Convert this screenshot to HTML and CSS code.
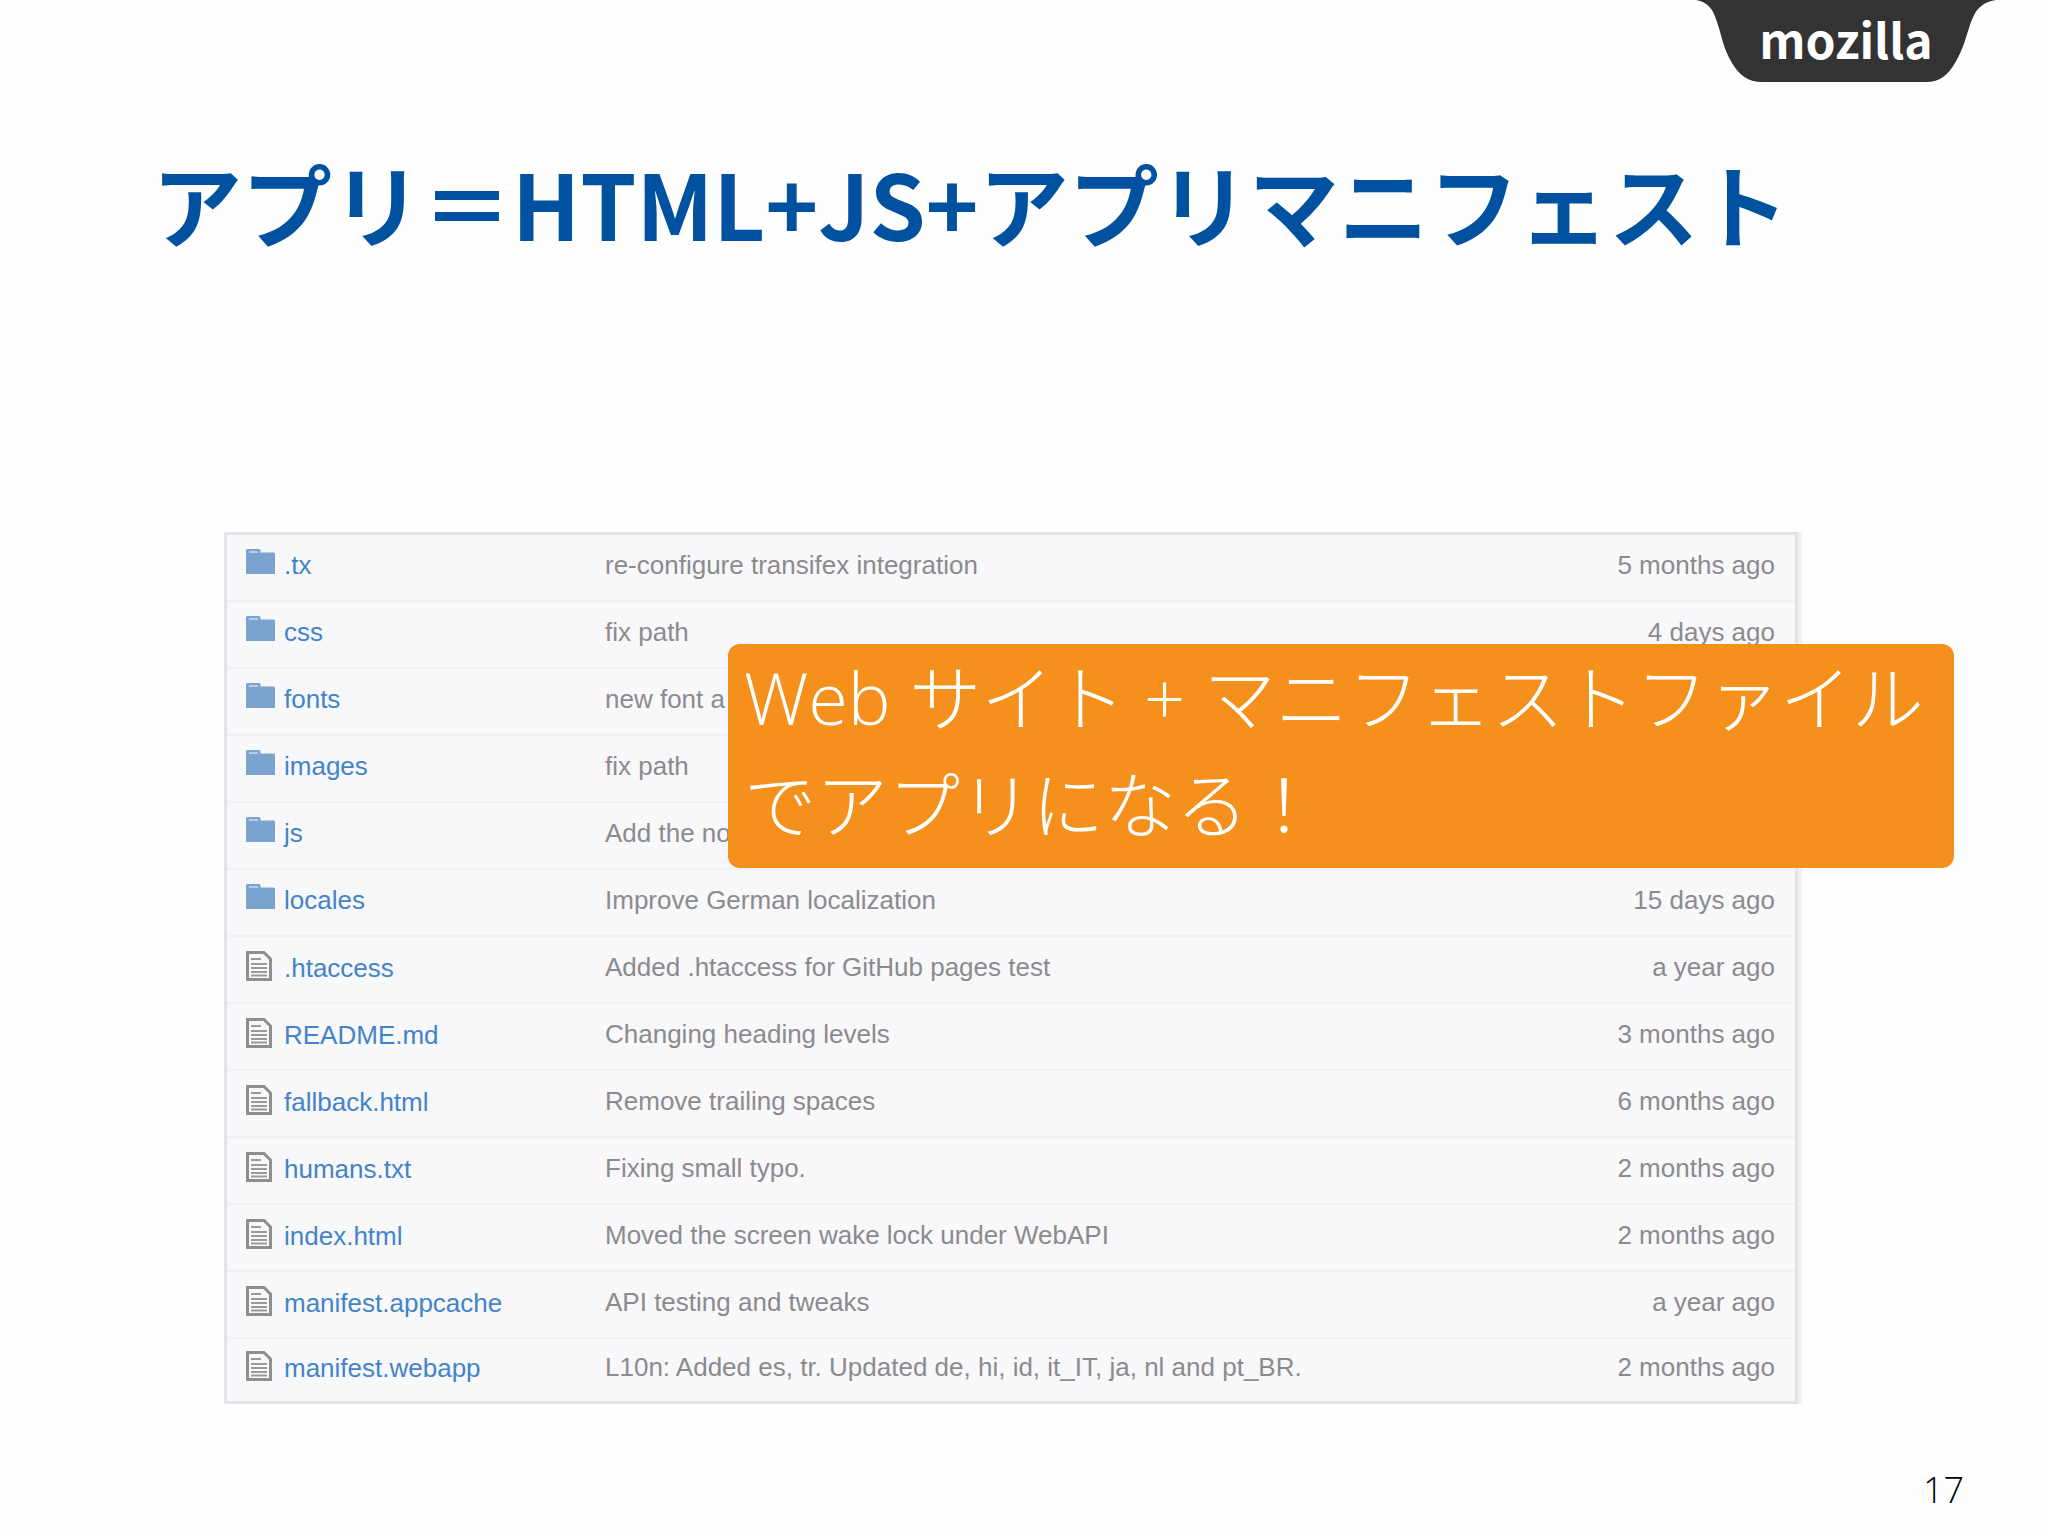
FILE: index.html
```html
<!DOCTYPE html>
<html lang="ja">
<head>
    <meta charset="UTF-8">
    <meta name="viewport" content="width=device-width, initial-scale=1.0">
    <title>アプリ＝HTML+JS+アプリマニフェスト</title>
    <link rel="stylesheet" href="styles.css">
</head>
<body>
    <!-- shared icons -->
    <svg class="sprite" aria-hidden="true">
        <symbol id="folder" viewBox="0 0 29 25">
            <path fill="#7ba3cf" d="M0 1.500Q0 0 1.500 0H13Q14.500 0 14.500 1.500V3.500H27.500Q29 3.500 29 5V25H0Z"/>
            <path fill="#b9cce4" d="M3 2H12V4H3Z"/>
        </symbol>
        <symbol id="file" viewBox="0 0 26 30">
            <path fill="#f8f8f8" stroke="#8d8f8c" stroke-width="3" d="M1.500 1.500H18L24.500 8V28.500H1.500Z"/>
            <path stroke="#999b9a" stroke-width="2" d="M5 8H15M5 13H21M5 17H21M5 21H21M5 24.500H21"/>
        </symbol>
    </svg>

    <header class="topbar">
        <div class="logo">
            <svg class="logo-tab" viewBox="0 0 300 82" aria-hidden="true">
                <path fill="#333" d="M0 0H300C286 2 280 9 275 22C270 36 268 48 259 63C252 75 244 82 230 82H66C52 82 43 75 36 63C27 48 26 36 21 22C17 9 12 2 0 0Z"/>
            </svg>
            <span class="logo-text">mozilla</span>
        </div>
    </header>

    <main class="slide">
        <h1>アプリ＝HTML+JS+アプリマニフェスト</h1>

        <div class="browser">
            <table class="files">
                <tbody>
                    <tr><td class="name"><svg class="icon folder"><use href="#folder"/></svg><a href="#">.tx</a></td><td class="message">re-configure transifex integration</td><td class="age">5 months ago</td></tr>
                    <tr><td class="name"><svg class="icon folder"><use href="#folder"/></svg><a href="#">css</a></td><td class="message">fix path</td><td class="age">4 days ago</td></tr>
                    <tr><td class="name"><svg class="icon folder"><use href="#folder"/></svg><a href="#">fonts</a></td><td class="message">new font a</td><td class="age"></td></tr>
                    <tr><td class="name"><svg class="icon folder"><use href="#folder"/></svg><a href="#">images</a></td><td class="message">fix path</td><td class="age"></td></tr>
                    <tr><td class="name"><svg class="icon folder"><use href="#folder"/></svg><a href="#">js</a></td><td class="message">Add the no</td><td class="age"></td></tr>
                    <tr><td class="name"><svg class="icon folder"><use href="#folder"/></svg><a href="#">locales</a></td><td class="message">Improve German localization</td><td class="age">15 days ago</td></tr>
                    <tr><td class="name"><svg class="icon file"><use href="#file"/></svg><a href="#">.htaccess</a></td><td class="message">Added .htaccess for GitHub pages test</td><td class="age">a year ago</td></tr>
                    <tr><td class="name"><svg class="icon file"><use href="#file"/></svg><a href="#">README.md</a></td><td class="message">Changing heading levels</td><td class="age">3 months ago</td></tr>
                    <tr><td class="name"><svg class="icon file"><use href="#file"/></svg><a href="#">fallback.html</a></td><td class="message">Remove trailing spaces</td><td class="age">6 months ago</td></tr>
                    <tr><td class="name"><svg class="icon file"><use href="#file"/></svg><a href="#">humans.txt</a></td><td class="message">Fixing small typo.</td><td class="age">2 months ago</td></tr>
                    <tr><td class="name"><svg class="icon file"><use href="#file"/></svg><a href="#">index.html</a></td><td class="message">Moved the screen wake lock under WebAPI</td><td class="age">2 months ago</td></tr>
                    <tr><td class="name"><svg class="icon file"><use href="#file"/></svg><a href="#">manifest.appcache</a></td><td class="message">API testing and tweaks</td><td class="age">a year ago</td></tr>
                    <tr><td class="name"><svg class="icon file"><use href="#file"/></svg><a href="#">manifest.webapp</a></td><td class="message">L10n: Added es, tr. Updated de, hi, id, it_IT, ja, nl and pt_BR.</td><td class="age">2 months ago</td></tr>
                </tbody>
            </table>

            <p class="callout">Web サイト + マニフェストファイル<br>でアプリになる！</p>
        </div>
    </main>

    <footer class="page-number">17</footer>
</body>
</html>
```

FILE: styles.css
```css
* {
    margin: 0;
    padding: 0;
    box-sizing: border-box;
}

body {
    min-height: 100vh;
    display: flex;
    flex-direction: column;
    background: #fefefe;
    font-family: "Liberation Sans", "Noto Sans CJK JP", sans-serif;
}

.sprite {
    position: absolute;
    width: 0;
    height: 0;
}

.topbar {
    display: flex;
    justify-content: flex-end;
    padding-right: 52px;
}

.logo {
    display: grid;
    width: 300px;
    height: 82px;
}

.logo-tab,
.logo-text {
    grid-area: 1 / 1;
}

.logo-tab {
    width: 300px;
    height: 82px;
}

.logo-text {
    font-family: "Noto Sans CJK JP", sans-serif;
    font-size: 48px;
    font-weight: 700;
    line-height: 76px;
    text-align: center;
    color: #fff;
}

.slide {
    flex: 1;
    padding: 0 250px 0 224px;
}

h1 {
    margin: 50px -100px 260px -72px;
    font-family: "Noto Sans CJK JP", sans-serif;
    font-size: 90px;
    font-weight: 700;
    line-height: 140px;
    white-space: nowrap;
    color: #0052a0;
}

.browser {
    position: relative;
}

.files {
    width: 100%;
    border: 3px solid #e4e3e7;
    border-collapse: separate;
    border-spacing: 0;
    background: #f8f7fa;
    box-shadow: 4px 0 0 #f1f0f3;
    font-size: 26px;
    line-height: 30px;
    color: #8b8b8e;
}

.files td {
    height: 67px;
    padding-bottom: 6px;
    border-bottom: 2px solid #f1f0f3;
    vertical-align: middle;
    white-space: nowrap;
}

.files tr:last-child td {
    height: 62px;
    border-bottom: none;
}

.files .name {
    width: 378px;
    padding-left: 19px;
}

.files .age {
    padding-right: 20px;
    text-align: right;
}

.files a {
    color: #4384c8;
    text-decoration: none;
}

.icon {
    display: inline-block;
    margin-right: 9px;
}

.icon.folder {
    width: 29px;
    height: 25px;
    vertical-align: baseline;
}

.icon.file {
    width: 26px;
    height: 30px;
    margin-right: 12px;
    vertical-align: -4px;
}

.callout {
    position: absolute;
    top: 112px;
    left: 504px;
    right: -156px;
    padding: 0 16px 10px;
    border-radius: 12px;
    background: #f4901b;
    font-family: "Open Sans", "Noto Sans CJK JP", sans-serif;
    font-size: 72px;
    font-weight: 300;
    line-height: 107px;
    white-space: nowrap;
    color: #fff;
}

.page-number {
    padding: 0 84px 18px 0;
    font-family: "Open Sans", sans-serif;
    font-size: 36px;
    font-weight: 300;
    line-height: 56px;
    text-align: right;
    color: #000;
}
```
